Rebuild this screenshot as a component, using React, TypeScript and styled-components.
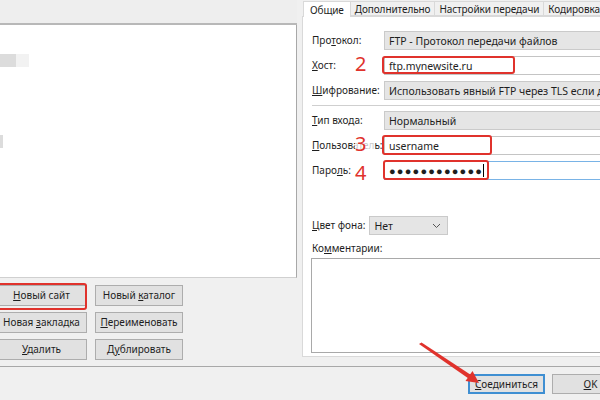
import React from 'react';
import styled, { createGlobalStyle } from 'styled-components';

const GlobalStyle = createGlobalStyle`
   html, body {
      margin: 0;
      padding: 0;
      overflow: hidden;
      background: #f0f0f0;
   }
   body {
      font-family: 'Noto Sans', 'Open Sans', sans-serif;
      font-size: 10.5px;
      color: #1e1e1e;
   }
`;

const RED = '#e0322c';

function App() {
   return (
      <>
         <GlobalStyle />
         <Page>
            <Main>
               <LeftCol>
                  <TopStrip />
                  <Tree>
                     <TreeItem $top={29}>
                        <Blur $w={16} />
                        <Blur $w={13} $faint />
                     </TreeItem>
                     <TreeItem $top={68}>
                        <Blur $w={3} />
                     </TreeItem>
                  </Tree>
                  <ButtonGrid>
                     <Button>
                        <U>Н</U>овый сайт
                        <Mark $w={94} $h={27} $left={-4} $top={-3} />
                     </Button>
                     <Button>
                        Новый <U>к</U>аталог
                     </Button>
                     <Button>
                        Новая <U>з</U>акладка
                     </Button>
                     <Button>
                        <U>П</U>ереименовать
                     </Button>
                     <Button>
                        <U>У</U>далить
                     </Button>
                     <Button>
                        Д<U>у</U>блировать
                     </Button>
                  </ButtonGrid>
               </LeftCol>
               <RightCol>
                  <Tabs>
                     <Tab $active>Общие</Tab>
                     <Tab>Дополнительно</Tab>
                     <Tab>Настройки передачи</Tab>
                     <Tab>Кодировка</Tab>
                  </Tabs>
                  <Panel>
                     <Form>
                        <Label>
                           Про<U>т</U>окол:
                        </Label>
                        <Select>FTP - Протокол передачи файлов</Select>
                        <Label>
                           <U>Х</U>ост:
                           <Num>2</Num>
                        </Label>
                        <Field>
                           <Input>ftp.mynewsite.ru</Input>
                           <Mark $w={133} $h={18} $left={-2} $top={0} />
                        </Field>
                        <Label>
                           <U>Ш</U>ифрование:
                        </Label>
                        <Select>Использовать явный FTP через TLS если доступен</Select>
                     </Form>
                     <Separator />
                     <Form>
                        <Label>
                           <U>Т</U>ип входа:
                        </Label>
                        <Select>Нормальный</Select>
                        <Label>
                           <U>П</U>ользователь:
                           <Num $veil>3</Num>
                        </Label>
                        <Field>
                           <Input>username</Input>
                           <Mark $w={110} $h={20} $left={-2} $top={-1} />
                        </Field>
                        <Label>
                           Паро<U>л</U>ь:
                           <Num $down>4</Num>
                        </Label>
                        <Field>
                           <Input $focus>
                              ●●●●●●●●●●●●<Caret />
                           </Input>
                           <Mark $w={106} $h={20} $left={-1} $top={-1} />
                        </Field>
                     </Form>
                     <ColorRow>
                        <Label>
                           <U>Ц</U>вет фона:
                        </Label>
                        <SmallSelect>
                           Нет
                           <svg width="9" height="6" viewBox="0 0 9 6">
                              <path d="M1 1 L4.5 4.5 L8 1" fill="none" stroke="#555" strokeWidth="1" />
                           </svg>
                        </SmallSelect>
                     </ColorRow>
                     <CommentLabel>
                        Ко<U>м</U>ментарии:
                     </CommentLabel>
                     <Comments />
                  </Panel>
               </RightCol>
            </Main>
            <Footer>
               <FooterButton $primary>
                  <U>С</U>оединиться
               </FooterButton>
               <FooterButton>
                  <U>О</U>K
               </FooterButton>
            </Footer>
            <Arrow width="600" height="400" viewBox="0 0 600 400">
               <polygon points="419,344 421.5,342.5 471,375 468.5,378.5" fill={RED} />
               <polygon points="479,383 465.5,381 472.5,371" fill={RED} />
            </Arrow>
         </Page>
      </>
   );
}

export default App;

const Page = styled.div`
   position: relative;
   width: 640px;
   height: 400px;
   display: flex;
   flex-direction: column;
   background: #f0f0f0;
`;
const Main = styled.div`
   display: flex;
   gap: 5px;
   height: 366px;
`;
const LeftCol = styled.div`
   width: 297px;
   display: flex;
   flex-direction: column;
`;
const TopStrip = styled.div`
   height: 23px;
   background: #eeeeee;
   border-bottom: 2px solid #b8b8b8;
`;
const Tree = styled.div`
   height: 252px;
   background: #fff;
   border-right: 1px solid #a8a8a8;
   border-bottom: 1px solid #d0d0d0;
   display: flex;
   flex-direction: column;
`;
const TreeItem = styled.div<{ $top: number }>`
   display: flex;
   margin-top: ${(p) => p.$top}px;
   height: 13px;
`;
const Blur = styled.span<{ $w: number; $faint?: boolean }>`
   width: ${(p) => p.$w}px;
   height: 13px;
   background: ${(p) => (p.$faint ? '#f2f2f2' : '#dcdcdc')};
`;
const ButtonGrid = styled.div`
   display: grid;
   grid-template-columns: 91px 88px;
   grid-auto-rows: 21px;
   column-gap: 8px;
   row-gap: 6px;
   margin: 7px 0 0 -4px;
`;
const Button = styled.div`
   position: relative;
   box-sizing: border-box;
   text-align: center;
   line-height: 19px;
   background: #e1e1e1;
   border: 1px solid #adadad;
   font-size: 10px;
   white-space: nowrap;
`;
const U = styled.span`
   text-decoration: underline;
   text-underline-offset: 1px;
`;
const Mark = styled.span<{ $w: number; $h: number; $left: number; $top: number }>`
   position: absolute;
   left: ${(p) => p.$left}px;
   top: ${(p) => p.$top}px;
   width: ${(p) => p.$w}px;
   height: ${(p) => p.$h}px;
   border: 2px solid ${RED};
   border-radius: 3px;
   box-sizing: border-box;
   pointer-events: none;
`;
const RightCol = styled.div`
   flex: 1;
   display: flex;
   flex-direction: column;
`;
const Tabs = styled.div`
   display: flex;
   align-items: flex-end;
   height: 16px;
   padding-left: 1px;
   position: relative;
   z-index: 1;
`;
const Tab = styled.div<{ $active?: boolean }>`
   display: flex;
   align-items: center;
   padding: 0 ${(p) => (p.$active ? 6 : 4)}px;
   height: ${(p) => (p.$active ? 15 : 13)}px;
   margin-bottom: ${(p) => (p.$active ? -1 : 0)}px;
   background: ${(p) => (p.$active ? '#fff' : '#f0f0f0')};
   border: 1px solid #d9d9d9;
   border-bottom: ${(p) => (p.$active ? 'none' : '1px solid #d9d9d9')};
   margin-right: -1px;
   font-size: 10px;
   letter-spacing: -0.1px;
   white-space: nowrap;
`;
const Panel = styled.div`
   height: 341px;
   background: #fff;
   border: 1px solid #d9d9d9;
   box-sizing: border-box;
   padding: 14px 0 0 9px;
   display: flex;
   flex-direction: column;
`;
const Form = styled.div`
   display: grid;
   grid-template-columns: 72px 1fr;
   grid-auto-rows: 19px;
   row-gap: 6px;
`;
const Label = styled.div`
   position: relative;
   line-height: 19px;
   white-space: nowrap;
   font-size: 10px;
`;
const Num = styled.span<{ $veil?: boolean; $down?: boolean }>`
   position: absolute;
   left: 43px;
   top: ${(p) => (p.$down ? 2 : -2)}px;
   padding-right: ${(p) => (p.$veil ? 8 : 0)}px;
   background: ${(p) => (p.$veil ? 'rgba(255,255,255,0.75)' : 'transparent')};
   color: ${RED};
   font-size: 20px;
   line-height: 20px;
   font-family: 'Noto Sans', sans-serif;
`;
const Select = styled.div`
   display: flex;
   align-items: center;
   padding-left: 4px;
   background: #e5e5e5;
   border: 1px solid #cacaca;
   white-space: nowrap;
   overflow: hidden;
`;
const Field = styled.div`
   position: relative;
   display: flex;
`;
const Input = styled.div<{ $focus?: boolean }>`
   flex: 1;
   display: flex;
   align-items: center;
   padding-left: 4px;
   background: #fff;
   border: 1px solid ${(p) => (p.$focus ? '#79b3e6' : '#c4c4c4')};
   letter-spacing: ${(p) => (p.$focus ? '1.2px' : '0')};
   font-size: ${(p) => (p.$focus ? '11px' : '10.5px')};
`;
const Caret = styled.span`
   width: 1px;
   height: 13px;
   margin-left: 0;
   background: #000;
`;
const Separator = styled.div`
   height: 1px;
   background: #cfcfcf;
   margin: 5px 0 5px;
`;
const ColorRow = styled.div`
   display: flex;
   align-items: center;
   gap: 4px;
   margin-top: 36px;
   height: 19px;
`;
const SmallSelect = styled.div`
   width: 79px;
   height: 19px;
   box-sizing: border-box;
   display: flex;
   align-items: center;
   justify-content: space-between;
   padding: 0 6px 0 4px;
   background: #e5e5e5;
   border: 1px solid #cacaca;
   font-size: 10.5px;
`;
const CommentLabel = styled.div`
   margin-top: 6px;
   height: 14px;
   font-size: 10px;
`;
const Comments = styled.div`
   margin: 3px 0 0 -1px;
   height: 93px;
   background: #fff;
   border: 1px solid #a9a9a9;
`;
const Footer = styled.div`
   flex: 1;
   display: flex;
   justify-content: flex-end;
   gap: 7px;
   padding: 7px 11px 0 0;
   border-top: 1px solid #a8a8a8;
`;
const FooterButton = styled.div<{ $primary?: boolean }>`
   width: 77px;
   height: 20px;
   box-sizing: border-box;
   text-align: center;
   line-height: ${(p) => (p.$primary ? 16 : 18)}px;
   background: #e1e1e1;
   border: ${(p) => (p.$primary ? '2px solid #3f8fd2' : '1px solid #adadad')};
   font-size: 10px;
`;
const Arrow = styled.svg`
   position: absolute;
   left: 0;
   top: 0;
   pointer-events: none;
`;
